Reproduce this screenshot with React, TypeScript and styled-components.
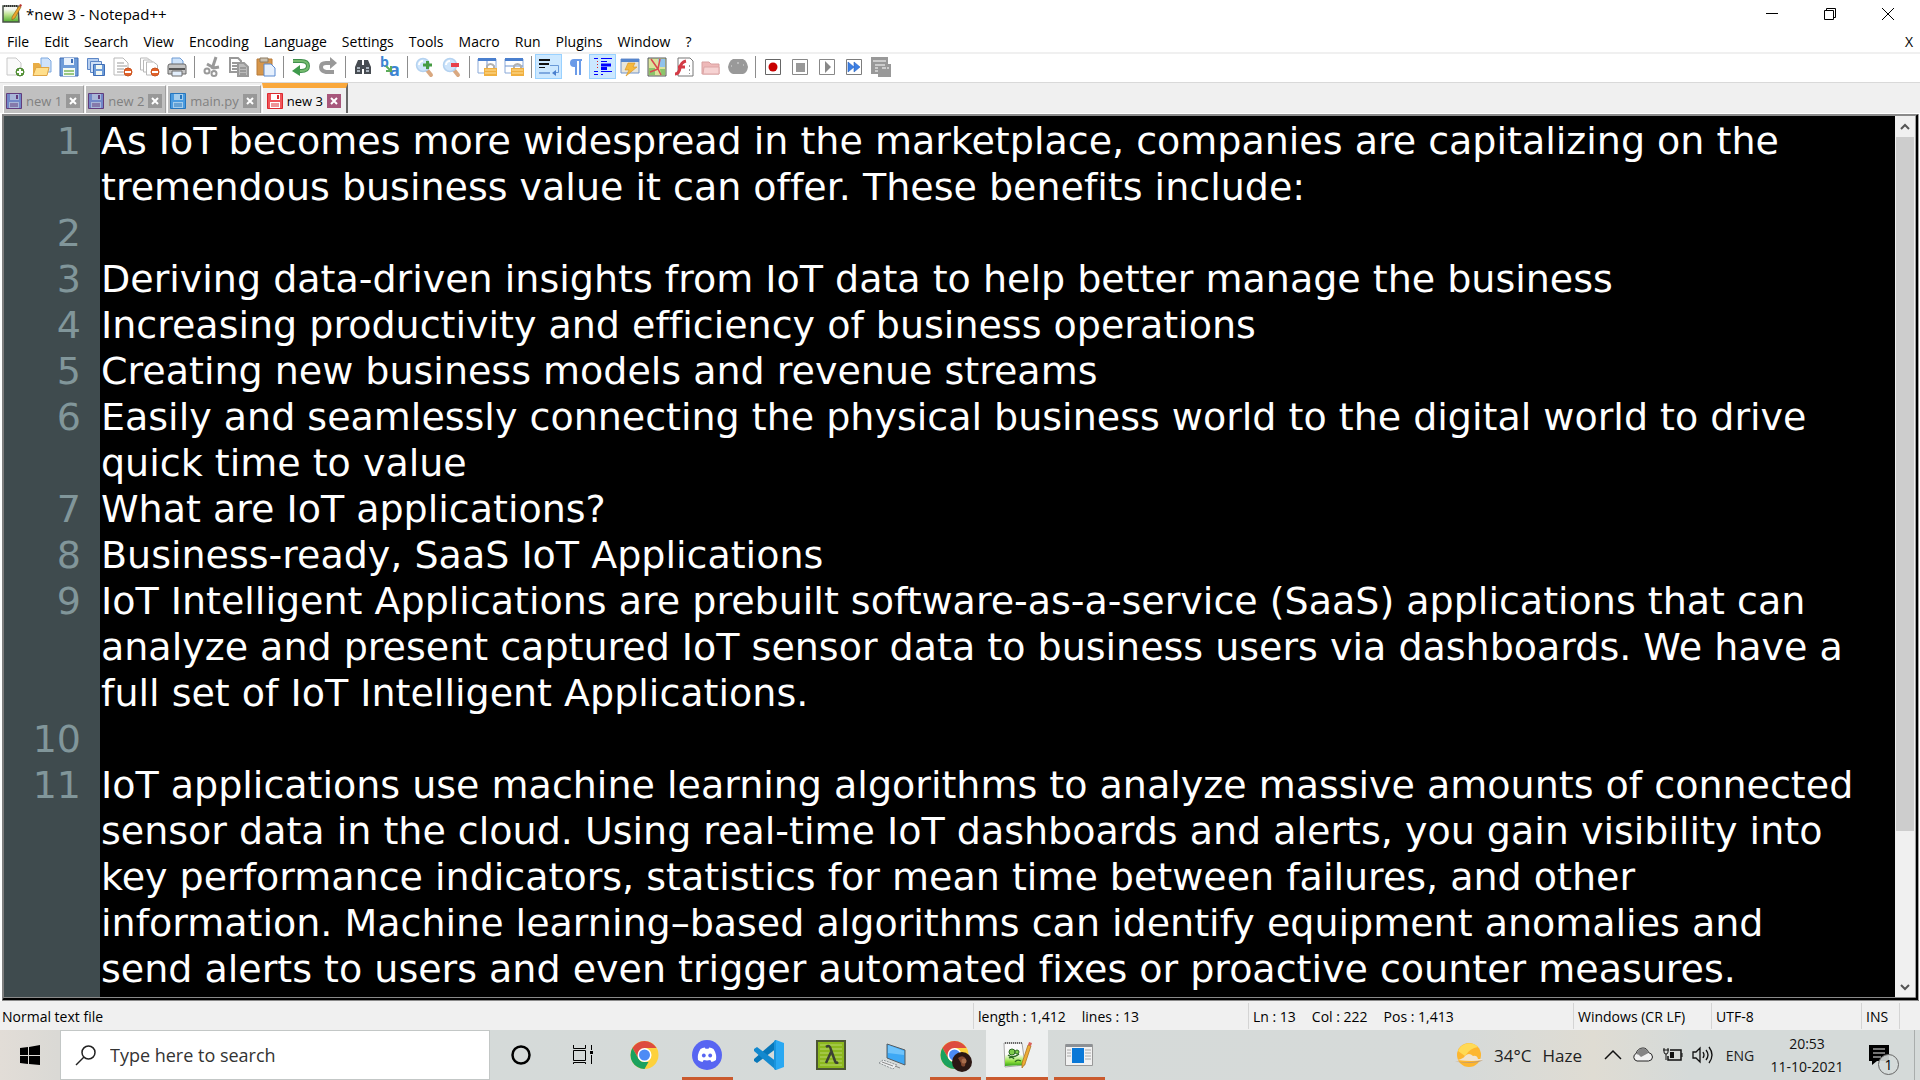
import React from "react";
import styled, { createGlobalStyle, css } from "styled-components";

const Global = createGlobalStyle`
  * { box-sizing: border-box; }
  body { margin: 0; font-family: "Open Sans", "Noto Sans", sans-serif; font-size: 14px; color: #000; }
  button, input, textarea { font: inherit; color: inherit; border: 0; padding: 0; margin: 0; background: none; outline: none; }
  svg { display: block; flex: none; overflow: visible; }
`;

const Screen = styled.div`
  height: 100vh;
  display: flex;
  flex-direction: column;
  overflow: hidden;
  background: #fff;
`;

/* ---------- title bar and menu ---------- */

const TitleBar = styled.header`
  height: 28px;
  display: flex;
  align-items: center;
  padding: 0 20px 0 2px;
  gap: 4px;
  flex: none;
`;
const Title = styled.h1`
  flex: 1;
  margin: 0;
  font-size: 15px;
  font-weight: 400;
`;
const Captions = styled.div`
  display: flex;
  gap: 34px;
`;
const CaptionButton = styled.button`
  width: 24px;
  height: 28px;
  display: grid;
  place-items: center;
`;
const MenuBar = styled.nav`
  height: 26px;
  display: flex;
  align-items: center;
  padding: 2px 7px 0;
  border-bottom: 2px solid #f0f0f0;
  flex: none;
`;
const MenuItems = styled.div`
  flex: 1;
  display: flex;
  gap: 15px;
`;

/* ---------- tool bar ---------- */

const ToolBar = styled.div`
  height: 29px;
  display: flex;
  padding-left: 1px;
  border-bottom: 1px solid #d9d9d9;
  flex: none;
`;
const Tool = styled.button<{ $on?: boolean }>`
  width: 27px;
  height: 25px;
  display: grid;
  place-items: center;
  border: 1px solid ${(p) => (p.$on ? "#99d1ff" : "transparent")};
  background: ${(p) => (p.$on ? "#cce8ff" : "transparent")};
`;
const Divider = styled.span`
  width: 8px;
  display: flex;
  justify-content: center;
  &::before { content: ""; width: 1px; height: 22px; margin-top: 2px; background: #8d8d8d; }
`;

/* ---------- tabs ---------- */

const TabStrip = styled.div`
  height: 31px;
  display: flex;
  align-items: flex-end;
  padding-left: 3px;
  background: #f0f0f0;
  border-bottom: 1px solid #fff;
  font-size: 13px;
  flex: none;
`;
const Tab = styled.div<{ $active?: boolean }>`
  display: flex;
  align-items: center;
  gap: 4px;
  height: 28px;
  padding: 3px 3px 0 2px;
  margin-right: 1px;
  background: #c0c0c0;
  color: #808080;
  border-left: 1px solid #fff;
  border-top: 1px solid #fff;
  border-right: 1px solid #a0a0a0;
  ${(p) =>
    p.$active &&
    css`
      height: 30px;
      padding: 0 5px 0 4px;
      background: #f0f0f0;
      color: #000;
      border-top: 5px solid #faa83c;
      border-right: 2px solid #696969;
    `}
`;
const CloseButton = styled.button<{ $active?: boolean }>`
  width: 14px;
  height: 14px;
  display: grid;
  place-items: center;
  background: ${(p) => (p.$active ? "#a8577c" : "#989898")};
`;

/* ---------- editor ---------- */

const Editor = styled.main`
  flex: 1;
  min-height: 0;
  display: flex;
  margin: 0 1px 0 2px;
  border: 2px solid #808080;
  border-top-color: #8a8a8a;
  border-right: 4px double #a0a0a0;
  border-bottom: 4px double #8a8a8a;
  background: #000;
  font-family: "DejaVu Sans", Verdana, sans-serif;
  font-size: 38px;
  line-height: 46px;
  font-variant-ligatures: none;
`;
const Gutter = styled.ol`
  width: 96px;
  margin: 0;
  padding: 2px 19px 0 0;
  list-style: none;
  text-align: right;
  background: #3f4b4e;
  color: #81969a;
  overflow: hidden;
  flex: none;
`;
const LineNumber = styled.li<{ $rows: number }>`
  height: ${(p) => p.$rows * 46}px;
`;
const TextArea = styled.textarea`
  flex: 1;
  min-width: 0;
  padding: 2px 0 0 1px;
  color: #fff;
  font-variant-ligatures: none;
  white-space: pre;
  resize: none;
  overflow: hidden;
`;
const ScrollBar = styled.div`
  width: 20px;
  display: flex;
  flex-direction: column;
  background: #f0f0f0;
  flex: none;
`;
const ScrollButton = styled.button`
  height: 21px;
  display: grid;
  place-items: center;
`;
const Track = styled.div`
  flex: 1;
  padding: 0 1px;
`;
const Thumb = styled.div`
  height: 82.7%;
  background: #cdcdcd;
`;

/* ---------- status bar ---------- */

const StatusBar = styled.footer`
  height: 29px;
  display: flex;
  padding-top: 2px;
  background: #f0f0f0;
  flex: none;
`;
const Status = styled.div<{ $width?: number }>`
  ${(p) => (p.$width ? `width: ${p.$width}px;` : "flex: 1; border-left: 0;")}
  display: flex;
  align-items: center;
  gap: 16px;
  height: 26px;
  padding-left: ${(p) => (p.$width ? 4 : 2)}px;
  ${(p) => p.$width && "border-left: 1px solid #d4d4d4;"}
  white-space: nowrap;
`;

/* ---------- task bar ---------- */

const TaskBar = styled.div`
  height: 50px;
  display: flex;
  background: linear-gradient(90deg, #e2ddd7 0, #dad9d5 3%, #d5dad9 20%, #d6dad9 76%, #dfdcd3 83%, #d5dad9 88%, #d5dad9 100%);
  flex: none;
`;
const StartButton = styled.button`
  width: 60px;
  display: grid;
  place-items: center;
`;
const SearchBox = styled.label`
  width: 430px;
  display: flex;
  align-items: center;
  gap: 14px;
  padding: 0 14px;
  background: #fff;
  border: 1px solid #c3c7c6;
`;
const SearchInput = styled.input`
  flex: 1;
  min-width: 0;
  font-size: 18px;
  &::placeholder { color: #333; opacity: 1; }
`;
const Apps = styled.div`
  flex: 1;
  display: flex;
`;
const AppButton = styled.button<{ $open?: boolean; $active?: boolean }>`
  width: 62px;
  display: grid;
  place-items: center;
  background: ${(p) => (p.$active ? "#eef0f0" : "transparent")};
  box-shadow: ${(p) => (p.$active ? "inset 0 -3px #ca5a2e" : "none")};
  ${(p) =>
    p.$open &&
    css`
      background: linear-gradient(#ca5a2e, #ca5a2e) center bottom / 51px 3px no-repeat;
    `}
`;
const Tray = styled.div`
  display: flex;
  align-items: center;
`;
const Weather = styled.button`
  display: flex;
  align-items: center;
  gap: 11px;
  margin-right: 16px;
  font-size: 17px;
  color: #222;
`;
const TrayButton = styled.button`
  width: 30px;
  height: 50px;
  display: grid;
  place-items: center;
`;
const Language = styled.button`
  width: 44px;
  color: #222;
`;
const Clock = styled.time`
  width: 90px;
  margin-right: 5px;
  text-align: center;
  line-height: 23px;
  color: #111;
`;
const Notices = styled.button`
  width: 58px;
  height: 50px;
  padding: 12px 0 0 12px;
  border-right: 1px solid #a9adac;
  margin-right: 5px;
`;

/* ---------- drawings ---------- */

const box = (w: number, children: React.ReactNode) => (
  <svg width={w} height={w} viewBox={`0 0 ${w} ${w}`} aria-hidden="true">{children}</svg>
);

const Page = ({ x = 3, y = 1, s = "#b8b8b8", f = "#fff" }) => (
  <path d={`M${x} ${y}h9l5 5v12h-14z`} fill={f} stroke={s} />
);

const Lock = () => (
  <>
    <path d="M10 12v-3a4 4 0 0 1 7 0v3" fill="none" stroke="#b0b0b0" strokeWidth="2" />
    <path d="M7 11h13v8H7z" fill="#f0b040" />
    <path d="M8 13h11M8 16h11" stroke="#ffe09a" />
  </>
);

const Lens = ({ children }: { children: React.ReactNode }) => (
  <>
    <path d="M12 13l4 5" stroke="#d9a880" strokeWidth="4" strokeLinecap="round" />
    <circle cx="8" cy="8" r="6.5" fill="#cfe5fb" stroke="#b4d2f0" strokeWidth="1.5" />
    <path d="M4 8a4 4 0 0 1 4-4" stroke="#fff" strokeWidth="2" fill="none" />
    {children}
  </>
);

const Floppy = ({ c, d, label = "#fff" }: { c: string; d: string; label?: string }) => (
  <svg width="16" height="16" viewBox="0 0 16 16" aria-hidden="true">
    <path d="M.5.5h15v15H.5z" fill={c} stroke={d} />
    <path d="M4 1h9v6H4z" fill={label} />
    <path d="M10 2h2v4h-2z" fill={d} />
    <path d="M3 9h10v6H3z" fill={label} />
    <path d="M4 11h8M4 13h8" stroke={d} />
  </svg>
);

const icons: Record<string, React.ReactNode> = {
  New: box(20, <><Page x={2} s="#c8c8c8" f="#fafafa" /><circle cx="15" cy="15" r="4" fill="#5d9c3c" stroke="#4c8633" /><path d="M12 15h6M15 12v6" stroke="#fff" strokeWidth="2" /></>),
  Open: box(20, <><path d="M9 1h7l3 3v11H9z" fill="#cfe2fa" stroke="#7fa9df" /><path d="M1 6h6l2 2v10H1z" fill="#e9ad45" /><path d="M1 18.500l3-8h13l-2 8z" fill="#ffdf8c" stroke="#e0a545" /></>),
  Save: box(20, <><path d="M1 1h18v18H1z" fill="#6d9bd8" stroke="#3e6db5" /><path d="M5 1h10v7H5z" fill="#e8f1fc" /><path d="M12 2h2v4h-2z" fill="#3e6db5" /><path d="M4 11h12v8H4z" fill="#f4fbf4" /><path d="M5 14h10M5 17h10" stroke="#7cb85c" strokeWidth="1.500" /></>),
  "Save all": box(20, <><path d="M1.500 1.500h11v11h-11z" fill="#b7cff0" stroke="#5c86c6" /><path d="M4.500 4.500h11v11h-11z" fill="#cfe0f6" stroke="#5c86c6" /><path d="M7.500 7.500h11v11h-11z" fill="#6d9bd8" stroke="#3e6db5" /><path d="M10 8h6v4h-6zM10 14h6v4h-6z" fill="#f2f8f2" /></>),
  Close: box(20, <><Page x={1} /><path d="M4 6h7M4 9h10M4 12h7M4 15h6" stroke="#999" /><circle cx="15" cy="15" r="4" fill="#e2622a" stroke="#c9531f" /><path d="M12 15h6" stroke="#fff" strokeWidth="2" /></>),
  "Close all": box(20, <><path d="M.5 1h7l3 3v9H.5z" fill="#fff" stroke="#b8b8b8" /><path d="M3.500 3h7l3 3v9h-10z" fill="#fff" stroke="#b8b8b8" /><path d="M6.500 5h7l4 3v10h-11z" fill="#fff" stroke="#b8b8b8" /><circle cx="15" cy="15" r="4" fill="#e2622a" stroke="#c9531f" /><path d="M12 15h6" stroke="#fff" strokeWidth="2" /></>),
  Print: box(20, <><path d="M5 9V1h8l3 3v5" fill="#cfe4fb" stroke="#6e9ad2" /><path d="M1 9q0-2 2-2h14q2 0 2 2v8H1z" fill="#c4c4c4" stroke="#666" /><path d="M2 12h16" stroke="#555" strokeWidth="2" /><path d="M5 14h10v5H5z" fill="#e3effd" stroke="#6d6d6d" /></>),
  Cut: box(20, <><path d="M14 0l-4 12M5 7l7 4 5-1" stroke="#999" strokeWidth="3" fill="none" /><circle cx="5" cy="14" r="2.500" fill="none" stroke="#999" strokeWidth="2" /><circle cx="12" cy="16.500" r="2.500" fill="none" stroke="#999" strokeWidth="2" /></>),
  Copy: box(20, <><path d="M1 1h8l3 3v11H1z" fill="#fff" stroke="#999" strokeWidth="2" /><path d="M3 6h6M3 9h5M3 12h5" stroke="#999" strokeWidth="2" /><path d="M9 6h6l4 4v9H9z" fill="#bbb" stroke="#999" strokeWidth="2" /><path d="M11 11h6M11 14h6M11 17h6" stroke="#999" strokeWidth="2" /></>),
  Paste: box(20, <><path d="M1 2h15v16H1z" fill="#d6964a" stroke="#b87a38" /><path d="M4 1h8v4H4z" fill="#c9c0b0" stroke="#8d7b60" /><path d="M8 7h7l4 4v8H8z" fill="#e6f0fd" stroke="#5a8ad0" /></>),
  Undo: box(20, <><path d="M2 4h8q7 0 7 5t-7 5H7" fill="none" stroke="#3f8f4c" strokeWidth="4" /><path d="M2 4h8q7 0 7 5t-7 5H7" fill="none" stroke="#73b96d" strokeWidth="2" /><path d="M9 8v11l-8-5z" fill="#3f9a4c" /></>),
  Redo: box(20, <><path d="M14 6H8q-5 0-5 4t5 5h8" fill="none" stroke="#999" strokeWidth="4" /><path d="M12 0v12l7-6z" fill="#999" /></>),
  Find: box(20, <><path d="M5 3h4v5h2V3h4l3 7v7h-7v-5H9v5H2v-7z" fill="#474c52" /><path d="M4 11h3M13 11h3M4 14h3M13 14h3" stroke="#aab3bd" strokeWidth="2" /></>),
  Replace: box(20, <><text x="0" y="10" fontSize="14" fontWeight="700" fill="#3d84d2">b</text><text x="9" y="19" fontSize="18" fontWeight="700" fill="#3d84d2">a</text><path d="M6 9l5 5M11 9v5H6" stroke="#5dab5a" strokeWidth="2" fill="none" /></>),
  "Zoom in": box(20, <Lens><path d="M8 8h9M12.500 4v8" stroke="#459b42" strokeWidth="3" /></Lens>),
  "Zoom out": box(20, <Lens><path d="M9 8h8" stroke="#e8404a" strokeWidth="4" /></Lens>),
  "Sync vertical": box(20, <><path d="M1 2h18v14H1z" fill="#fff" stroke="#8aa9d8" /><path d="M1 1h18v3H1z" fill="#4a7fce" /><path d="M10 4v12" stroke="#6e94d0" /><Lock /></>),
  "Sync horizontal": box(20, <><path d="M1 2h18v14H1z" fill="#fff" stroke="#8aa9d8" /><path d="M1 1h18v3H1z" fill="#4a7fce" /><path d="M1 9h18" stroke="#6e94d0" /><Lock /></>),
  "Word wrap": box(20, <><path d="M0 3h11M0 7h10" stroke="#111" strokeWidth="2" /><path d="M0 10.500h6" stroke="#111" /><path d="M0 16h11" stroke="#7ea9e0" strokeWidth="2" /><path d="M11 8.500h8.500v7H15" fill="none" stroke="#6a9ad8" /><path d="M13 16l4-3v6z" fill="#4a7fce" /></>),
  "Show all characters": box(20, <><path d="M9 3h7M10 3v15M14 3v15" stroke="#6b9be8" strokeWidth="2" /><path d="M10 2H8a4 4 0 0 0 0 8h2z" fill="#6b9be8" /></>),
  "Indent guide": box(20, <><path d="M1 1.500h4M8 1.500h11M8 4.500h6M1 14.500h4M8 14.500h11M1 17.500h4M8 17.500h2" stroke="#00f" /><path d="M8 8h10M8 11.500h6" stroke="#00f" strokeWidth="3" /><path d="M4.500 4v9" stroke="#e02020" strokeDasharray="1 2" /></>),
  Language: box(20, <><path d="M1 2h18v14H1z" fill="#e8e5da" stroke="#7093ca" /><path d="M1 2h18v3H1z" fill="#5585cd" /><path d="M8 6h7l-2 4h4L6 19l3-6H5z" fill="#f6b93e" stroke="#d59220" strokeWidth=".6" /></>),
  "Document map": box(20, <><path d="M1 1h18v18H1z" fill="#dbe39b" stroke="#555b62" /><path d="M11 2h7v8h-5z" fill="#8fc2ec" /><path d="M2 11h6v7H2zM13 12h5v6h-4z" fill="#8bc46a" /><path d="M4 2l7 10 3 6M11 12l-8 3M13 2l-2 10" stroke="#d9484e" fill="none" strokeWidth="1.500" /></>),
  "Function list": box(20, <><path d="M4 1h12l3 3v15H4z" fill="#fff" stroke="#777" /><path d="M1 17q4 0 5-6t6-7M4 10h7" fill="none" stroke="#d33a45" strokeWidth="3" /><path d="M15.500 8v9" stroke="#999" strokeDasharray="2 2" /></>),
  Folder: box(20, <><path d="M1 17V5h7l2 2h8v10z" fill="#eeb8b8" stroke="#d8a0a0" /><path d="M2 17l1-7h15v7z" fill="#f6d2d2" stroke="#dca6a6" /></>),
  Monitor: box(20, <><path d="M5 2h10q4 2 5 8q-1 6-5 7H5q-4-1-5-7q1-6 5-8z" fill="#999" /><path d="M3 9h1M9 6h2M15 8h1" stroke="#ddd" /></>),
  Record: box(20, <><path d="M2.500 2.500h15v15h-15z" fill="#fff" stroke="#666" /><circle cx="10" cy="10" r="4.500" fill="#c80000" /></>),
  Stop: box(20, <><path d="M2.500 2.500h15v15h-15z" fill="#fff" stroke="#888" /><path d="M6 6h9v9H6z" fill="#999" /></>),
  Play: box(20, <><path d="M2.500 2.500h15v15h-15z" fill="#fff" stroke="#888" /><path d="M8 4v12l6-6z" fill="#888" /></>),
  "Play many": box(20, <><path d="M2.500 2.500h15v15h-15z" fill="#fff" stroke="#7d7d7d" /><path d="M4 5v10l6-5zM10 5v10l6-5z" fill="#3b7fe4" stroke="#2c63bd" strokeWidth=".6" /></>),
  "Save macro": box(20, <><path d="M0 0h17v17H0zM7 7h13v13H7z" fill="#999" /><path d="M2 4h13M4 8h10M4 11h3M4 14h3M11 11h4M16 11h2" stroke="#fff" /></>),
};

const TitleIcon = () => (
  <svg width="20" height="20" viewBox="0 0 20 20" aria-hidden="true">
    <defs>
      <linearGradient id="sheet" x1="0" y1="0" x2="0" y2="1">
        <stop offset="0.200" stopColor="#f6f8f2" />
        <stop offset="0.550" stopColor="#b9e08a" />
        <stop offset="1" stopColor="#4fae2c" />
      </linearGradient>
    </defs>
    <path d="M1 2h15l1 16H1z" fill="url(#sheet)" stroke="#4a5348" strokeWidth="1.500" />
    <path d="M2 2h14" stroke="#333" strokeWidth="2" strokeDasharray="1 1" />
    <path d="M17 2l2 1-6 11-3 2 0-3z" fill="#eda52c" stroke="#8f6a1c" strokeWidth=".7" />
    <path d="M17 2l1-2 2 1-1 2z" fill="#b8322c" />
  </svg>
);

const NotepadIcon = () => (
  <svg width="30" height="30" viewBox="0 0 30 30" aria-hidden="true">
    <defs>
      <linearGradient id="grass" x1="0" y1="0" x2="0" y2="1">
        <stop offset="0" stopColor="#f4fbe8" />
        <stop offset="0.600" stopColor="#8fe03c" />
        <stop offset="1" stopColor="#35a01c" />
      </linearGradient>
    </defs>
    <path d="M2 3h18l3 22-20 2z" fill="#fafafa" stroke="#a8a8a8" />
    <path d="M3 15h18l1 10-19 1z" fill="url(#grass)" />
    <path d="M3 3h17" stroke="#666" strokeWidth="2" strokeDasharray="1 1" />
    <circle cx="10" cy="12" r="3" fill="#7ecb4b" stroke="#2c6a22" />
    <circle cx="15" cy="12" r="2" fill="#7ecb4b" stroke="#2c6a22" />
    <path d="M6 15q5 4 11-1M7 18q3-2 5 1M13 22q2-3 6-1" fill="none" stroke="#2c6a22" strokeWidth="1.300" />
    <path d="M26 5l3 1-6 18-3 4v-5z" fill="#edab35" stroke="#a66f18" strokeWidth=".7" />
    <path d="M26 5l1-3 3 1-1 3z" fill="#d9625c" />
  </svg>
);

const ChromeIcon = ({ avatar = false }) => (
  <svg width="32" height="32" viewBox="0 0 32 32" aria-hidden="true">
    <circle cx="15.500" cy="16" r="14" fill="#fdd13d" />
    <path d="M3.400 9A14 14 0 0 1 27.600 9H15.500L9.500 19.500z" fill="#dd4b3e" />
    <path d="M3.400 9l6 10.500q2 3.500 6.100 3.500h4L15.500 30A14 14 0 0 1 3.400 9z" fill="#1ba15e" />
    <circle cx="15.500" cy="16" r="7" fill="#fff" />
    <circle cx="15.500" cy="16" r="5.500" fill="#4c8bf5" />
    {avatar && (
      <>
        <circle cx="23" cy="23" r="10" fill="#2b1713" />
        <path d="M19 19q5-4 8 1l-1 7q-4 2-4-3z" fill="#83482f" />
        <circle cx="25" cy="22" r="2.500" fill="#a86d4c" />
      </>
    )}
  </svg>
);

const DiscordIcon = () => (
  <svg width="30" height="30" viewBox="0 0 30 30" aria-hidden="true">
    <circle cx="15" cy="15" r="15" fill="#5865f2" />
    <path d="M8.500 9q2-1.200 4.300-1.600l.7 1.300h3l.7-1.300q2.300.4 4.300 1.600Q25 14.500 24 20q-2 1.600-4.500 2l-1.200-2q-3.300.9-6.600 0l-1.200 2Q8 21.600 6 20 5 14.500 8.500 9z" fill="#fff" />
    <ellipse cx="11.800" cy="15.500" rx="1.900" ry="2.100" fill="#5865f2" />
    <ellipse cx="18.200" cy="15.500" rx="1.900" ry="2.100" fill="#5865f2" />
  </svg>
);

const CodeIcon = () => (
  <svg width="30" height="30" viewBox="0 0 30 30" aria-hidden="true">
    <path d="M22 0L0 19v2l3 2L23 8z" fill="#0877b9" />
    <path d="M0 9l3-2 20 15-1 8L0 11z" fill="#1389cf" />
    <path d="M22 0l8 3v24l-8 3z" fill="#2aa8f2" />
    <path d="M22 0v30q-1 0-2-1V1q1-1 2-1z" fill="#1a94dc" />
  </svg>
);

const LambdaIcon = () => (
  <svg width="30" height="30" viewBox="0 0 30 30" aria-hidden="true">
    <path d="M1 1h28v28H1z" fill="#8cb81e" stroke="#4c5634" strokeWidth="2" />
    <path d="M4 5h22M4 9h22M4 13h22M4 17h22M4 21h22M4 25h22" stroke="#b8d56c" />
    <path d="M10 7q4-3 5 3l4 11q1 3 3 1M15 12L10 23" fill="none" stroke="#3b4034" strokeWidth="2.500" />
  </svg>
);

const ComputerIcon = () => (
  <svg width="30" height="30" viewBox="0 0 30 30" aria-hidden="true">
    <path d="M9 4l18 6v15L9 18z" fill="#3da8f5" stroke="#555c61" />
    <path d="M10 5l16 6v4L10 13z" fill="#6fc3fb" />
    <path d="M1 23l4-3 14 5-4 4z" fill="#eceeef" stroke="#8d9396" strokeDasharray="2 1" />
    <path d="M4 22l11 4M17 26l5 2" stroke="#888" />
  </svg>
);

const WindowIcon = () => (
  <svg width="28" height="28" viewBox="0 0 28 28" aria-hidden="true">
    <path d="M.5 3.500h27v21H.5z" fill="#f1f1f1" stroke="#999" />
    <path d="M1 3h26v3H1z" fill="#8c9094" />
    <path d="M2 9h4M2 12h4M2 15h4M20 9h6M20 12h6M20 15h6M20 18h6" stroke="#aaa" />
    <path d="M7 7h12v15H7z" fill="#0a78d7" />
  </svg>
);

/* ---------- content ---------- */

const menus = ["File", "Edit", "Search", "View", "Encoding", "Language", "Settings", "Tools", "Macro", "Run", "Plugins", "Window", "?"];

const toolGroups = [
  ["New", "Open", "Save", "Save all", "Close", "Close all", "Print"],
  ["Cut", "Copy", "Paste"],
  ["Undo", "Redo"],
  ["Find", "Replace"],
  ["Zoom in", "Zoom out"],
  ["Sync vertical", "Sync horizontal"],
  ["Word wrap", "Show all characters", "Indent guide", "Language", "Document map", "Function list", "Folder", "Monitor"],
  ["Record", "Stop", "Play", "Play many", "Save macro"],
];
const pressed = ["Word wrap", "Indent guide"];

const tabs = [
  { name: "new 1", c: "#7187c8", d: "#623c7c", label: "#a9b6d8" },
  { name: "new 2", c: "#7187c8", d: "#623c7c", label: "#a9b6d8" },
  { name: "main.py", c: "#4a9be0", d: "#2776bd", label: "#a5cdec" },
  { name: "new 3", c: "#f0555a", d: "#dc2a30", label: "#fff", active: true },
];

const lines: string[][] = [
  ["As IoT becomes more widespread in the marketplace, companies are capitalizing on the", "tremendous business value it can offer. These benefits include:"],
  [""],
  ["Deriving data-driven insights from IoT data to help better manage the business"],
  ["Increasing productivity and efficiency of business operations"],
  ["Creating new business models and revenue streams"],
  ["Easily and seamlessly connecting the physical business world to the digital world to drive", "quick time to value"],
  ["What are IoT applications?"],
  ["Business-ready, SaaS IoT Applications"],
  ["IoT Intelligent Applications are prebuilt software-as-a-service (SaaS) applications that can", "analyze and present captured IoT sensor data to business users via dashboards. We have a", "full set of IoT Intelligent Applications."],
  [""],
  ["IoT applications use machine learning algorithms to analyze massive amounts of connected", "sensor data in the cloud. Using real-time IoT dashboards and alerts, you gain visibility into", "key performance indicators, statistics for mean time between failures, and other", "information. Machine learning–based algorithms can identify equipment anomalies and", "send alerts to users and even trigger automated fixes or proactive counter measures."],
];

export default function App() {
  return (
    <Screen>
      <Global />
      <TitleBar>
        <TitleIcon />
        <Title>*new 3 - Notepad++</Title>
        <Captions>
          <CaptionButton aria-label="Minimize">
            {box(12, <path d="M0 5.500h12" stroke="#000" />)}
          </CaptionButton>
          <CaptionButton aria-label="Restore">
            {box(12, <path d="M.5 2.500h9v9h-9zM2.500 2V.5h9v9H10" fill="none" stroke="#000" />)}
          </CaptionButton>
          <CaptionButton aria-label="Close window">
            {box(12, <path d="M0 0l12 12M12 0L0 12" stroke="#000" />)}
          </CaptionButton>
        </Captions>
      </TitleBar>
      <MenuBar>
        <MenuItems>
          {menus.map((m) => <button key={m}>{m}</button>)}
        </MenuItems>
        <button>X</button>
      </MenuBar>
      <ToolBar>
        {toolGroups.map((group, i) => (
          <React.Fragment key={i}>
            {i > 0 && <Divider />}
            {group.map((t) => (
              <Tool key={t} aria-label={t} $on={pressed.includes(t)}>{icons[t]}</Tool>
            ))}
          </React.Fragment>
        ))}
      </ToolBar>
      <TabStrip>
        {tabs.map((t) => (
          <Tab key={t.name} $active={t.active}>
            <Floppy c={t.c} d={t.d} label={t.label} />
            <span>{t.name}</span>
            <CloseButton $active={t.active} aria-label={`Close ${t.name}`}>
              {box(8, <path d="M1 1l6 6M7 1L1 7" stroke="#fff" strokeWidth="2" />)}
            </CloseButton>
          </Tab>
        ))}
      </TabStrip>
      <Editor>
        <Gutter>
          {lines.map((l, i) => <LineNumber key={i} $rows={l.length}>{i + 1}</LineNumber>)}
        </Gutter>
        <TextArea aria-label="Document text" spellCheck={false} defaultValue={lines.flat().join("\n")} />
        <ScrollBar>
          <ScrollButton aria-label="Scroll up">
            {box(10, <path d="M1 7l4-4 4 4" fill="none" stroke="#555" strokeWidth="2" />)}
          </ScrollButton>
          <Track><Thumb /></Track>
          <ScrollButton aria-label="Scroll down">
            {box(10, <path d="M1 3l4 4 4-4" fill="none" stroke="#555" strokeWidth="2" />)}
          </ScrollButton>
        </ScrollBar>
      </Editor>
      <StatusBar>
        <Status>Normal text file</Status>
        <Status $width={275}><span>length : 1,412</span><span>lines : 13</span></Status>
        <Status $width={325}><span>Ln : 13</span><span>Col : 222</span><span>Pos : 1,413</span></Status>
        <Status $width={138}>Windows (CR LF)</Status>
        <Status $width={150}>UTF-8</Status>
        <Status $width={38}>INS</Status>
        <Status $width={21} />
      </StatusBar>
      <TaskBar>
        <StartButton aria-label="Start">
          {box(20, <path d="M0 3l8-1v8H0zM9 2l11-2v10H9zM0 11h8v8l-8-1zM9 11h11v9L9 19z" fill="#000" />)}
        </StartButton>
        <SearchBox>
          <svg width="21" height="21" viewBox="0 0 21 21" aria-hidden="true">
            <circle cx="13.500" cy="7.500" r="6.500" fill="none" stroke="#222" strokeWidth="1.500" />
            <path d="M9 12l-8 8" stroke="#222" strokeWidth="1.500" />
          </svg>
          <SearchInput aria-label="Search" placeholder="Type here to search" />
        </SearchBox>
        <Apps>
          <AppButton aria-label="Cortana">{box(20, <circle cx="10" cy="10" r="8.500" fill="none" stroke="#000" strokeWidth="2.500" />)}</AppButton>
          <AppButton aria-label="Task view">
            {box(20, <path d="M.5 0v3.500h12V0M.5 5.500h12v10H.5zM.5 19v-1.500h12V19M18.500 0v5M18.500 10v9M17 7.500h3M17 6.500h3M17 8.500h3" fill="none" stroke="#000" />)}
          </AppButton>
          <AppButton aria-label="Chrome"><ChromeIcon /></AppButton>
          <AppButton aria-label="Discord" $open><DiscordIcon /></AppButton>
          <AppButton aria-label="Code editor"><CodeIcon /></AppButton>
          <AppButton aria-label="Lambda"><LambdaIcon /></AppButton>
          <AppButton aria-label="Computer"><ComputerIcon /></AppButton>
          <AppButton aria-label="Chrome profile" $open><ChromeIcon avatar /></AppButton>
          <AppButton aria-label="Notepad++" $active><NotepadIcon /></AppButton>
          <AppButton aria-label="Window" $open><WindowIcon /></AppButton>
        </Apps>
        <Tray>
          <Weather>
            <svg width="28" height="26" viewBox="0 0 28 26" aria-hidden="true">
              <circle cx="14" cy="13" r="12" fill="#fdb62f" />
              <path d="M3 9a12 12 0 0 1 20-4q-8 1-13 9z" fill="#ffda55" />
              <path d="M2 18q6-1 8-4 4-4 8 0 4-1 5 3h4v1q-8 2-25 0z" fill="#f0e3cf" />
              <path d="M0 19q12 3 28-1-4 3-13 3T0 19z" fill="#c49d6c" />
            </svg>
            <span>34°C</span>
            <span>Haze</span>
          </Weather>
          <TrayButton aria-label="Show hidden icons">{box(18, <path d="M1 13l8-8 8 8" fill="none" stroke="#111" strokeWidth="1.500" />)}</TrayButton>
          <TrayButton aria-label="Cloud drive">{box(20, <><path d="M4 16a4 4 0 0 1-1-7.500q2-5.500 7-5.500 4 0 5.500 4.500 4 1 4 4.500t-4 4z" fill="#f2f2f2" stroke="#222" /><path d="M3 9q2-5.500 7-5.500 4 0 5.500 4.500L8 12Q6 9 3 9z" fill="#858585" /></>)}</TrayButton>
          <TrayButton aria-label="Battery">{box(20, <><path d="M7 5h11v10H5v-4" fill="none" stroke="#111" strokeWidth="1.500" /><path d="M7 7h4v6H7z" fill="#111" /><path d="M19 8v4M1 3v4q0 2 2 2t2-2V3M0 5h6M3 9v6" stroke="#111" fill="none" /></>)}</TrayButton>
          <TrayButton aria-label="Volume">
            {box(20, <path d="M0 7h3l4-4v14l-4-4H0zM10 7q2 3 0 6M13 5q4 5 0 10M16 2q6 8 0 16" fill="none" stroke="#111" strokeWidth="1.300" />)}
          </TrayButton>
          <Language>ENG</Language>
          <Clock>20:53<br />11-10-2021</Clock>
          <Notices aria-label="1 new notification">
            <svg width="32" height="32" viewBox="0 0 32 32">
              <path d="M0 0h20v16H8l-5 4v-4H0z" fill="#000" />
              <path d="M4 4h12M4 8h12M4 12h8" stroke="#e8e8e8" />
              <circle cx="19.500" cy="19.500" r="10" fill="#d5dad9" fillOpacity=".9" stroke="#666" />
              <text x="19.500" y="25" textAnchor="middle" fontSize="14" fill="#000">1</text>
            </svg>
          </Notices>
        </Tray>
      </TaskBar>
    </Screen>
  );
}
